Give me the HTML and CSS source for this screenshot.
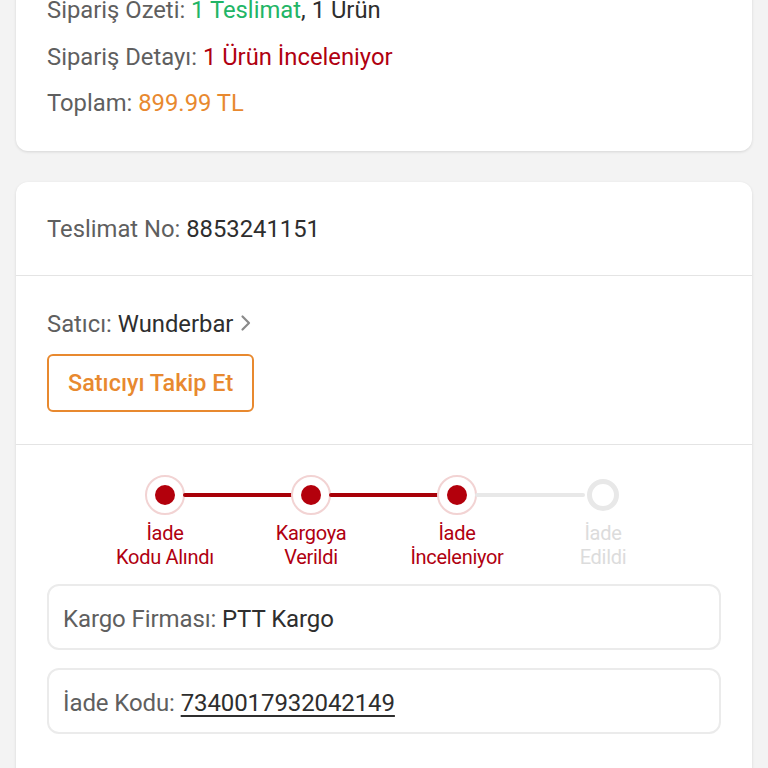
FILE: index.html
```html
<!DOCTYPE html>
<html lang="tr">
<head>
<meta charset="utf-8">
<link rel="stylesheet" href="styles.css">
</head>
<body>
<div class="page">
  <div class="card summary">
    <div class="row"><span class="lbl">Sipariş Özeti: </span><span class="green">1 Teslimat</span><span class="val">, 1 Ürün</span></div>
    <div class="row"><span class="lbl">Sipariş Detayı: </span><span class="red">1 Ürün İnceleniyor</span></div>
    <div class="row"><span class="lbl">Toplam: </span><span class="orange">899.99 TL</span></div>
  </div>

  <div class="card delivery">
    <div class="section sec-no">
      <span class="lbl">Teslimat No: </span><span class="val">8853241151</span>
    </div>
    <div class="section sec-seller">
      <div class="seller"><span class="lbl">Satıcı: </span><span class="val">Wunderbar</span>
        <svg class="chev" width="12" height="18" viewBox="0 0 12 18"><path d="M2.5 2.5 L9 9 L2.5 15.5" fill="none" stroke="#8a8a8a" stroke-width="2.2" stroke-linecap="round" stroke-linejoin="round"/></svg>
      </div>
      <button class="follow">Satıcıyı Takip Et</button>
    </div>
    <div class="section sec-track">
      <div class="stepper">
        <div class="step done line-done"><div class="dot"></div><div class="slabel">İade<br>Kodu Alındı</div></div>
        <div class="step done line-done"><div class="dot"></div><div class="slabel">Kargoya<br>Verildi</div></div>
        <div class="step done line-todo"><div class="dot"></div><div class="slabel">İade<br>İnceleniyor</div></div>
        <div class="step todo"><div class="dot"></div><div class="slabel">İade<br>Edildi</div></div>
      </div>
      <div class="infobox"><span class="lbl">Kargo Firması: </span><span class="val">PTT Kargo</span></div>
      <div class="infobox"><span class="lbl">İade Kodu: </span><span class="val code">7340017932042149</span></div>
    </div>
  </div>
</div>
</body>
</html>
```

FILE: styles.css
```css
html, body {
  margin: 0;
  padding: 0;
  background: #f3f3f3;
  font-family: Roboto, "Noto Sans", "Liberation Sans", sans-serif;
  overflow: hidden;
}
.page {
  padding: 0 16px;
  display: flex;
  flex-direction: column;
  gap: 31px;
}
.card {
  background: #fff;
  border-radius: 12px;
  box-shadow: 0 1px 3px rgba(0,0,0,0.12);
}
.summary {
  margin-top: -33px;
  padding: 20px 31px 24px;
}
.row {
  font-size: 23.8px;
  line-height: 46.5px;
  height: 46.5px;
}
.lbl { color: #5f5f5f; }
.val { color: #2e2e2e; }
.green { color: #22b566; }
.red { color: #b00010; }
.orange { color: #e8892f; }

.delivery {
  height: 640px;
}
.section {
  padding: 0 31px;
  font-size: 23.8px;
}
.sec-no {
  height: 93px;
  line-height: 95px;
  border-bottom: 1px solid #e4e4e4;
}
.sec-seller {
  padding-top: 35px;
  padding-bottom: 32px;
  border-bottom: 1px solid #e4e4e4;
}
.seller {
  line-height: 26px;
  display: flex;
  align-items: center;
}
.seller .lbl { white-space: pre; }
.chev { margin-left: 7px; margin-top: -1px; }
.follow {
  margin-top: 17px;
  height: 58px;
  padding: 0 19px;
  border: 2px solid #e8892f;
  border-radius: 6px;
  background: #fff;
  color: #e8892f;
  font-family: inherit;
  font-size: 23.4px;
  font-weight: 500;
}
.sec-track {
  padding-top: 30px;
}
.stepper {
  display: grid;
  grid-template-columns: repeat(4, 146px);
  justify-content: center;
}
.step {
  position: relative;
  display: flex;
  flex-direction: column;
  align-items: center;
}
.step::after {
  content: "";
  position: absolute;
  top: 18px;
  left: calc(50% + 18px);
  width: 110px;
  height: 4px;
  border-radius: 2px;
}
.line-done::after { background: #a80008; }
.line-todo::after { background: #e8e8e8; }
.todo::after { display: none; }
.dot {
  width: 40px;
  height: 40px;
  box-sizing: border-box;
  border-radius: 50%;
  position: relative;
}
.done .dot {
  border: 2px solid #f2d3d3;
  background: #fff;
}
.done .dot::before {
  content: "";
  position: absolute;
  left: 8px;
  top: 8px;
  width: 20px;
  height: 20px;
  border-radius: 50%;
  background: #b3000c;
}
.todo .dot {
  width: 32px;
  height: 32px;
  margin-top: 4px;
  margin-bottom: 4px;
  border: 5px solid #e8e8e8;
}
.slabel {
  margin-top: 6px;
  text-align: center;
  font-size: 20px;
  line-height: 24px;
  letter-spacing: -0.3px;
  color: #b00010;
}
.todo .slabel { color: #dcdcdc; }
.infobox {
  margin-top: 18px;
  height: 66px;
  box-sizing: border-box;
  border: 2px solid #ebebeb;
  border-radius: 12px;
  padding: 4px 14px 0;
  display: flex;
  align-items: center;
  font-size: 24px;
  letter-spacing: -0.1px;
  white-space: pre;
}
.stepper + .infobox { margin-top: 15px; }
.code { text-decoration: underline; text-decoration-thickness: 2px; text-underline-offset: 4px; }
```
